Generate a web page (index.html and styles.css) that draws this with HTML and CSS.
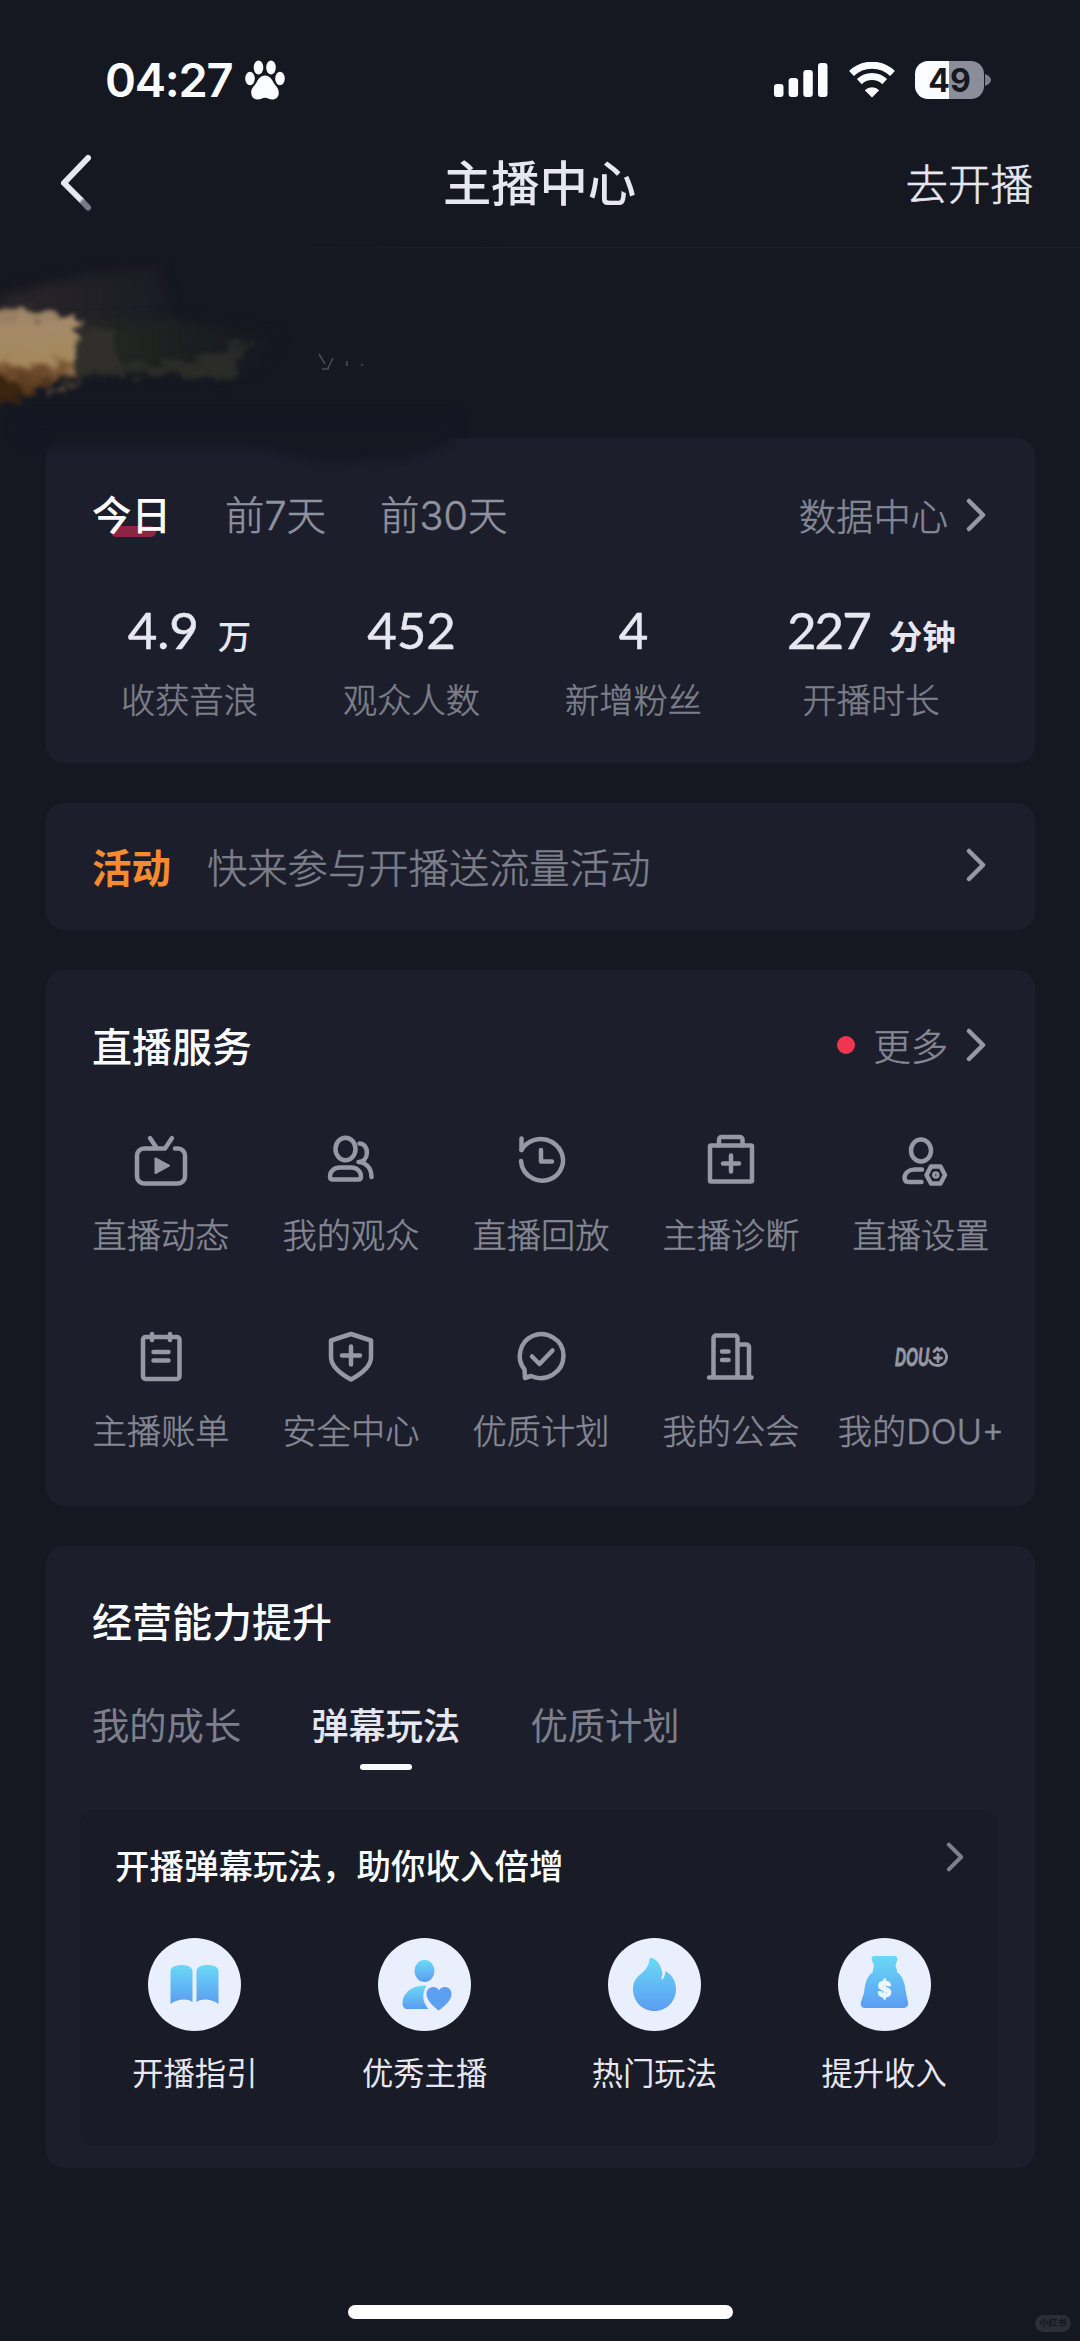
FILE: index.html
```html
<!DOCTYPE html>
<html lang="zh-CN">
<head>
<meta charset="utf-8">
<title>主播中心</title>
<link rel="stylesheet" href="styles.css">
</head>
<body>
<svg class="defs" width="0" height="0" aria-hidden="true">
  <defs>
    <linearGradient id="blue" x1="0" y1="0" x2="0" y2="1">
      <stop offset="0" stop-color="#6ad9f6"/><stop offset="1" stop-color="#5b9cf3"/>
    </linearGradient>
    <linearGradient id="backFade" gradientUnits="userSpaceOnUse" x1="22" y1="46" x2="28" y2="52">
      <stop offset="0" stop-color="#e6e7f0"/><stop offset="0.35" stop-color="#77798a"/>
    </linearGradient>
    <symbol id="chevron" viewBox="0 0 20 34"><path d="M3 3 17 17 3 31"/></symbol>
  </defs>
</svg>
<div class="app">
  <div class="status">
    <div class="status-left">
      <span class="time">04:27</span>
      <svg class="paw" width="40" height="40" viewBox="0 0 40 40" fill="#fafcff"><ellipse cx="13.500" cy="7.500" rx="4.800" ry="7"/><ellipse cx="26" cy="7.500" rx="4.800" ry="7"/><ellipse cx="5" cy="18.500" rx="4.800" ry="6.800"/><ellipse cx="35" cy="18.500" rx="4.800" ry="6.800"/><path d="M20 15.500c4 0 6.500 3 8.500 7 2 3.500 5.300 5.500 5.300 10.200 0 4.300-2.800 6.800-6.500 6.800-3 0-4.500-1.800-7.300-1.800s-4.300 1.800-7.300 1.800c-3.700 0-6.500-2.500-6.500-6.800 0-4.700 3.300-6.700 5.300-10.200 2-4 4.500-7 8.500-7z"/></svg>
    </div>
    <div class="status-right">
      <svg width="54" height="34" viewBox="0 0 54 34" fill="#fafcff"><rect y="21" width="9.500" height="13" rx="3"/><rect x="14.600" y="15" width="9.500" height="19" rx="3"/><rect x="29.300" y="7" width="9.500" height="27" rx="3"/><rect x="44" width="9.500" height="34" rx="3"/></svg>
      <svg class="wifi" width="48" height="36" viewBox="0 0 48 36" fill="none" stroke="#fafcff" stroke-width="7"><path d="M3.500 11.500a29.500 29.500 0 0 1 41 0"/><path d="M11.300 19.600a18.500 18.500 0 0 1 25.400 0"/><path stroke="none" fill="#fafcff" d="M24 35.500 16.800 28.200a10.500 10.500 0 0 1 14.400 0z"/></svg>
      <div class="battery"><span>49</span></div>
      <svg class="nub" width="6" height="12" viewBox="0 0 6 12"><path d="M0 0c8 3 8 9 0 12z" fill="#7c7e89"/></svg>
    </div>
  </div>
  <div class="header">
    <svg width="34" height="60" viewBox="0 0 34 60" fill="none" stroke="#e6e7f0" stroke-width="6" stroke-linecap="round" stroke-linejoin="round"><path d="M29 5 5 30 22 47"/><path d="M23 48 29 54.500" stroke="url(#backFade)"/></svg>
    <h1>主播中心</h1>
    <span class="go">去开播</span>
  </div>
  <div class="profile">
    <svg class="smudge" width="560" height="250" viewBox="0 0 560 250" color-interpolation-filters="sRGB">
      <defs>
        <filter id="rough" x="-10%" y="-20%" width="120%" height="140%"><feTurbulence type="fractalNoise" baseFrequency="0.06 0.1" numOctaves="4" seed="4" result="n"/><feDisplacementMap in="SourceGraphic" in2="n" scale="26" xChannelSelector="R" yChannelSelector="G"/><feGaussianBlur stdDeviation="2"/></filter>
        <filter id="soft" x="-20%" y="-50%" width="140%" height="200%"><feGaussianBlur stdDeviation="6"/></filter>
        <linearGradient id="tan" x1="0" y1="0" x2="0" y2="1"><stop offset="0" stop-color="#8d765c"/><stop offset="0.150" stop-color="#a58a6a"/><stop offset="0.550" stop-color="#a5885c"/><stop offset="0.650" stop-color="#735130"/><stop offset="1" stop-color="#3f2610"/></linearGradient>
        <linearGradient id="trail" x1="0" y1="0" x2="1" y2="0"><stop offset="0" stop-color="#3a3632"/><stop offset="0.250" stop-color="#232620"/><stop offset="1" stop-color="#1b1e22" stop-opacity="0.300"/></linearGradient>
        <linearGradient id="haze" x1="0" y1="0" x2="1" y2="0"><stop offset="0" stop-color="#2a2629"/><stop offset="1" stop-color="#1a1b25"/></linearGradient>
      </defs>
      <path d="M20 170H455L456 194 400 212 320 214 262 200 52 200 20 188z" fill="#151721" filter="url(#soft)"/>
      <path d="M0 48 90 26 160 20 172 74 80 82 0 72z" fill="url(#haze)" filter="url(#soft)"/>
      <path d="M60 76 170 70 280 88 262 112 230 134 170 124 60 126z" fill="url(#trail)" filter="url(#soft)"/>
      <g filter="url(#rough)">
        <path d="M70 84 110 82 120 118 80 124z" fill="#302f2c"/>
        <path d="M70 120 180 112 252 92 232 134 160 126 70 128z" fill="#302f2a" opacity="0.800"/>
        <path d="M-20 60 78 68 76 122 24 150-20 154z" fill="url(#tan)"/>
        <path d="M-20 120 8 130 32 144 10 152-20 154z" fill="#3b2410"/>
        <path d="M42 146 78 128 72 140 54 150z" fill="#4a3d35"/>
      </g>
      <g fill="none" stroke="#4b4e57" stroke-width="1.500"><path d="M319 106 325 116M333 110 328 120M322 121h7"/><path d="M347 113v5M361 117h2"/></g>
    </svg>
  </div>
  <main class="cards">
    <section class="card stats">
      <div class="row">
        <div class="periods"><span class="on">今日</span><span>前7天</span><span>前30天</span></div>
        <div class="more"><span>数据中心</span><svg class="chev"><use href="#chevron"/></svg></div>
      </div>
      <div class="figures">
        <div><p class="value">4.9<small>万</small></p><p class="label">收获音浪</p></div>
        <div><p class="value">452</p><p class="label">观众人数</p></div>
        <div><p class="value">4</p><p class="label">新增粉丝</p></div>
        <div><p class="value tight">227<small class="heavy">分钟</small></p><p class="label">开播时长</p></div>
      </div>
    </section>
    <section class="card promo">
      <b>活动</b><span>快来参与开播送流量活动</span><svg class="chev"><use href="#chevron"/></svg>
    </section>
    <section class="card services">
      <div class="row">
        <h2>直播服务</h2>
        <div class="more"><i class="dot"></i><span>更多</span><svg class="chev"><use href="#chevron"/></svg></div>
      </div>
      <div class="grid">
        <div class="item"><svg class="ico" viewBox="0 0 60 60"><path d="M24 18.500H13a7 7 0 0 0-7 7v21a7 7 0 0 0 7 7h34a7 7 0 0 0 7-7v-21a7 7 0 0 0-7-7h-3"/><path d="M19 8 26 18.500h8L41 8"/><path class="fill" d="M24.500 28.500v14.500L38 35.700z"/></svg><span>直播动态</span></div>
        <div class="item"><svg class="ico" viewBox="0 0 60 60"><ellipse cx="24.500" cy="19" rx="10" ry="11.300"/><path d="M19 37.500h11c6 0 10 4 10 9 0 2-1 3-3 3h-25c-2 0-3-1-3-3 0-5 4-9 10-9z"/><path d="M38.500 13.500c10 0 10 18.500-1 18.500 8 .5 13 6.500 13 15"/></svg><span>我的观众</span></div>
        <div class="item"><svg class="ico" viewBox="0 0 60 60"><path d="M10.500 20C16 10 30 5.500 41 12c11 7 14 19 8 29-6 9.500-18 12-27 7.500-7-3.500-11.500-10-12-17.500"/><path d="M10.500 8.500V20"/><path d="M30 20v11.500h11"/></svg><span>直播回放</span></div>
        <div class="item"><svg class="ico" viewBox="0 0 60 60"><rect x="9" y="15.500" width="42" height="36" rx="1"/><path d="M18 15.500V9.500a2.500 2.500 0 0 1 2.500-2.500h18.500a2.500 2.500 0 0 1 2.500 2.500v6"/><path d="M30 25.500v16M22 33.500h16"/></svg><span>主播诊断</span></div>
        <div class="item"><svg class="ico" viewBox="0 0 60 60"><ellipse cx="30" cy="20.500" rx="10" ry="11"/><path d="M31 39.500H24c-6 0-10 3.500-10.500 8 0 3 1 4.500 4 4.500h13"/><path d="M40 36.500h9.500l4.500 8.500-4.500 8.500H40L35.500 45z"/><circle cx="44.800" cy="45" r="1.500"/></svg><span>直播设置</span></div>
        <div class="item"><svg class="ico" viewBox="0 0 60 60"><rect x="12" y="11" width="36.500" height="42" rx="2.500"/><path d="M21 8v6M39 8v6M22.500 26H37.500M22.500 34.500H37.500"/></svg><span>主播账单</span></div>
        <div class="item"><svg class="ico" viewBox="0 0 60 60"><path d="M30 8 50 14.500v16.500c0 9-8 16-20 22.500C18 47 10 40 10 31V14.500z"/><path d="M30 20.500v18M21 29.500h18"/></svg><span>安全中心</span></div>
        <div class="item"><svg class="ico" viewBox="0 0 60 60"><path d="M13.500 43.500c-9-11-4.500-28 8-33.500 14-6 31 4 31 19.500 0 17-17.500 27-32.500 20.500l-6 2z"/><path d="M21 30.500l7.500 7.500 13-13.500"/></svg><span>优质计划</span></div>
        <div class="item"><svg class="ico" viewBox="0 0 60 60"><path d="M8 51.500h42.500M12.500 51V12a2.500 2.500 0 0 1 2.500-2.500h19a2.500 2.500 0 0 1 2.500 2.500v39M37 18.500h8.500a2.500 2.500 0 0 1 2.500 2.500v30M21 25.500h6.500M21 34h6.500"/></svg><span>我的公会</span></div>
        <div class="item"><svg class="ico" viewBox="0 0 60 60"><text class="dou" x="4" y="40" textLength="34" lengthAdjust="spacingAndGlyphs">DOU</text><g class="thin"><path d="M43 25.500 46.500 22l1.500 2.500 3-1.500c3 2.500 5 5.500 4.500 9-.5 4.500-4 7.500-8.500 7.500-4 0-7-1.500-8.500-5"/><path d="M47 28.500v7M43.500 32h7"/></g></svg><span>我的DOU+</span></div>
      </div>
    </section>
    <section class="card growth">
      <h2>经营能力提升</h2>
      <div class="tabs"><span>我的成长</span><span class="on">弹幕玩法</span><span>优质计划</span></div>
      <div class="panel">
        <div class="panel-head"><h3>开播弹幕玩法，助你收入倍增</h3><svg class="chev"><use href="#chevron"/></svg></div>
        <div class="tips">
          <div><svg class="disc" viewBox="0 0 93 93"><circle cx="46.500" cy="46.500" r="46.500"/><path fill="url(#blue)" d="M22.500 33c0-8 22-8 22 0v31c-5-4-16-3-22 2zM48.500 33c0-8 22-8 22 0v33c-6-5-17-6-22-2z"/></svg><span>开播指引</span></div>
          <div><svg class="disc" viewBox="0 0 93 93"><circle cx="46.500" cy="46.500" r="46.500"/><g fill="url(#blue)"><ellipse cx="46.500" cy="33" rx="10" ry="11"/><path d="M47.500 47.500C33 47 24.500 56 24.500 65c0 4 2 6 5 6h21c-6-7-7-15-2-23z"/></g><path fill="#5c9ff3" d="M60.500 72.500C51 65 48.500 60 48.500 56c0-7 9-9.500 12.500-3.500 3.500-6 12.500-3.500 12.500 3.500 0 5-4 10-13 16.500z"/></svg><span>优秀主播</span></div>
          <div><svg class="disc" viewBox="0 0 93 93"><circle cx="46.500" cy="46.500" r="46.500"/><path fill="url(#blue)" d="M44 20c6 2 10 9 10.500 16.500-1 2-1.500 4-.5 5.500 2-1.500 3-5 3.500-9 7 4 10.500 11 10.500 18 0 12-9 22-21.500 22S25 63 25 51c0-8 4-12 9-16 4.500-4 7-8 7.500-13.500 0-1.500 1-2 2.500-1.500z"/></svg><span>热门玩法</span></div>
          <div><svg class="disc" viewBox="0 0 93 93"><circle cx="46.500" cy="46.500" r="46.500"/><path fill="url(#blue)" d="M37 18h19c3 0 4 2 3 5l-1.500 4c0 2 2 5 1.500 7 6 4 8 12 9 21l2 9c1 4-2 6-5 6H28c-4 0-6-2-5-6l3-9c1-10 3-17 9-21-.5-2 1-5 1-7l-2-4c-1-3 0-5 3-5z"/><text class="dollar" x="46.500" y="58.500" text-anchor="middle">$</text></svg><span>提升收入</span></div>
        </div>
      </div>
    </section>
  </main>
  <div class="home"></div>
  <div class="mark">小红书</div>
</div>
</body>
</html>
```

FILE: styles.css
```css
* { box-sizing: border-box; margin: 0; padding: 0; }
body { background: #151721; }
.defs { position: absolute; }
.app {
  position: relative;
  width: 1080px;
  height: 2341px;
  display: flex;
  flex-direction: column;
  overflow: hidden;
  background: #151721;
  color: #fafcff;
  font-family: "Noto Sans CJK SC", sans-serif;
  white-space: nowrap;
}
svg { display: block; flex: none; }

.status {
  height: 120px;
  padding: 40px 89px 0 105px;
  display: flex;
  justify-content: space-between;
}
.status-left, .status-right { display: flex; align-items: center; height: 80px; }
.time { font: 600 47px/80px Inter, sans-serif; letter-spacing: -1.300px; }
.paw { margin-left: 13px; }
.wifi { margin-left: 20px; }
.battery {
  margin-left: 19px;
  width: 69px;
  height: 38px;
  border-radius: 13px;
  background: linear-gradient(90deg, #fafcff 34px, #8b8d98 34px);
  color: #151721;
  font: 700 32px/39px Inter, sans-serif;
  text-align: center;
}
.nub { margin-left: 1px; }

.header {
  height: 128px;
  padding: 0 47px 0 59px;
  display: grid;
  grid-template-columns: 1fr auto 1fr;
  align-items: center;
  border-bottom: 1px solid;
  border-image: linear-gradient(90deg, #151721 25%, #1f212c 48%) 1;
  color: #e6e7f0;
}
.header svg { margin-bottom: 2px; }
.header h1 { font-size: 48.300px; font-weight: 500; line-height: 60px; margin: 0 13px 8px 0; }
.go { justify-self: end; font-size: 42.500px; font-weight: 300; line-height: 60px; margin-bottom: 3px; -webkit-text-stroke: 0.600px; }

.profile { height: 190px; }
.smudge { position: relative; z-index: 1; }

.cards { display: flex; flex-direction: column; gap: 40px; width: 989px; margin-left: 46px; }
.card { background: #1c1e2b; border-radius: 18px; }
.row { display: flex; justify-content: space-between; align-items: center; height: 60px; }
.more { display: flex; align-items: center; color: #868895; font-size: 37.300px; font-weight: 300; -webkit-text-stroke: 0.500px; }
.chev {
  width: 20px;
  height: 34px;
  margin-left: 18px;
  fill: none;
  stroke: #9698a4;
  stroke-width: 4.500;
  stroke-linecap: round;
  stroke-linejoin: round;
}
h2 { font-size: 40px; font-weight: 500; line-height: 60px; }

.stats { height: 325px; padding: 47px 49px 0 46px; }
.periods {
  display: flex;
  gap: 54px;
  padding-top: 2px;
  font-family: Inter, "Noto Sans CJK SC", sans-serif;
  font-size: 39.500px;
  font-weight: 300;
  line-height: 60px;
  color: #9092a0;
  -webkit-text-stroke: 0.500px;
  position: relative;
  z-index: 0;
}
.periods .on { position: relative; color: #fafcff; font-weight: 500; -webkit-text-stroke: 0; }
.periods .on::before {
  content: "";
  position: absolute;
  z-index: -1;
  left: 19px;
  bottom: 9px;
  width: 45px;
  height: 11px;
  border-radius: 5px;
  background: #8e2443;
}
.figures { display: flex; gap: 86px; padding: 48px 0 0 29px; text-align: center; }
.figures div { width: 137px; margin-right: -1px; }
.figures div:last-child { width: 168px; }
.value {
  height: 74px;
  font: 400 51px/74px Lato, sans-serif;
  color: #e6e7f0;
  -webkit-text-stroke: 0.500px #e6e7f0;
}
.tight { letter-spacing: -2px; }
.value small { font: 500 33.500px/50px "Noto Sans CJK SC", sans-serif; letter-spacing: 0; margin-left: 19px; -webkit-text-stroke: 0; }
.value small.heavy { font-weight: 700; }
.label { font-size: 34.200px; font-weight: 300; line-height: 44px; margin-top: 9px; color: #7d7f8b; -webkit-text-stroke: 0.500px; }

.promo { height: 127px; padding: 0 49px 0 46px; display: flex; align-items: center; font-size: 40.300px; font-weight: 300; color: #7d7f8b; }
.promo b, .promo span { margin-bottom: 3px; }
.promo span { -webkit-text-stroke: 0.500px; }
.promo b { color: #f58a2e; font-size: 39.500px; font-weight: 700; margin-right: 36px; }
.promo .chev { margin-left: auto; margin-bottom: 3px; }

.services { height: 536px; padding: 45px 49px 0 46px; }
.dot { width: 18px; height: 18px; border-radius: 50%; background: #f03550; margin-right: 18px; }
.grid { display: grid; grid-template-columns: repeat(5, 190px); grid-auto-rows: 196px; margin: 55px 0 0 -26px; }
.item {
  display: flex;
  flex-direction: column;
  align-items: center;
  font-family: Inter, "Noto Sans CJK SC", sans-serif;
  font-size: 34.200px;
  font-weight: 300;
  line-height: 50px;
  color: #868895;
  -webkit-text-stroke: 0.500px;
}
.ico {
  width: 60px;
  height: 60px;
  margin-bottom: 21px;
  overflow: visible;
  fill: none;
  stroke: #9698a4;
  stroke-width: 4.500;
  stroke-linecap: round;
  stroke-linejoin: round;
}
.ico .fill { fill: #9698a4; stroke-width: 2; }
.ico .thin { stroke-width: 2.800; }
.dou { font: italic 700 26px/1 "Liberation Sans", sans-serif; fill: #9698a4; -webkit-text-stroke: 0; stroke: #9698a4; stroke-width: 0.800; }

.growth { height: 622px; padding: 44px 36px 0 34px; }
.growth h2 { margin-left: 12px; }
.tabs { display: flex; gap: 70px; margin: 44px 0 0 12px; font-size: 37.300px; line-height: 60px; color: #7d7f8b; }
.tabs .on { position: relative; color: #e6e7f0; font-weight: 500; }
.tabs .on::after {
  content: "";
  position: absolute;
  left: 49px;
  bottom: -16px;
  width: 52px;
  height: 6px;
  border-radius: 3px;
  background: #fafcff;
}
.panel { height: 336px; margin-top: 56px; border-radius: 14px; background: #191b26; }
.panel-head { display: flex; justify-content: space-between; padding: 29px 35px 0 35px; }
.panel-head .chev { width: 18px; height: 30px; margin: 3px 0 0; stroke: #7d7f8b; }
h3 { font-size: 34.500px; font-weight: 500; line-height: 50px; }
.tips { display: grid; grid-template-columns: repeat(4, 1fr); margin-top: 49px; }
.tips div { display: flex; flex-direction: column; align-items: center; font-size: 31.300px; line-height: 46px; color: #e6e7f0; }
.disc { width: 93px; height: 93px; margin-bottom: 18px; }
.disc circle { fill: #e9effd; }
.dollar { font: 700 21px Inter, sans-serif; fill: #edf7ff; stroke: #edf7ff; stroke-width: 1.200; }

.home { width: 385px; height: 14px; margin: 137px 0 0 348px; border-radius: 7px; background: #fff; }
.mark {
  position: absolute;
  left: 1035px;
  top: 2315px;
  width: 36px;
  height: 17px;
  border-radius: 9px;
  background: #2b2d37;
  color: #151721;
  font-size: 9px;
  font-weight: 700;
  line-height: 16px;
  text-align: center;
}
```
